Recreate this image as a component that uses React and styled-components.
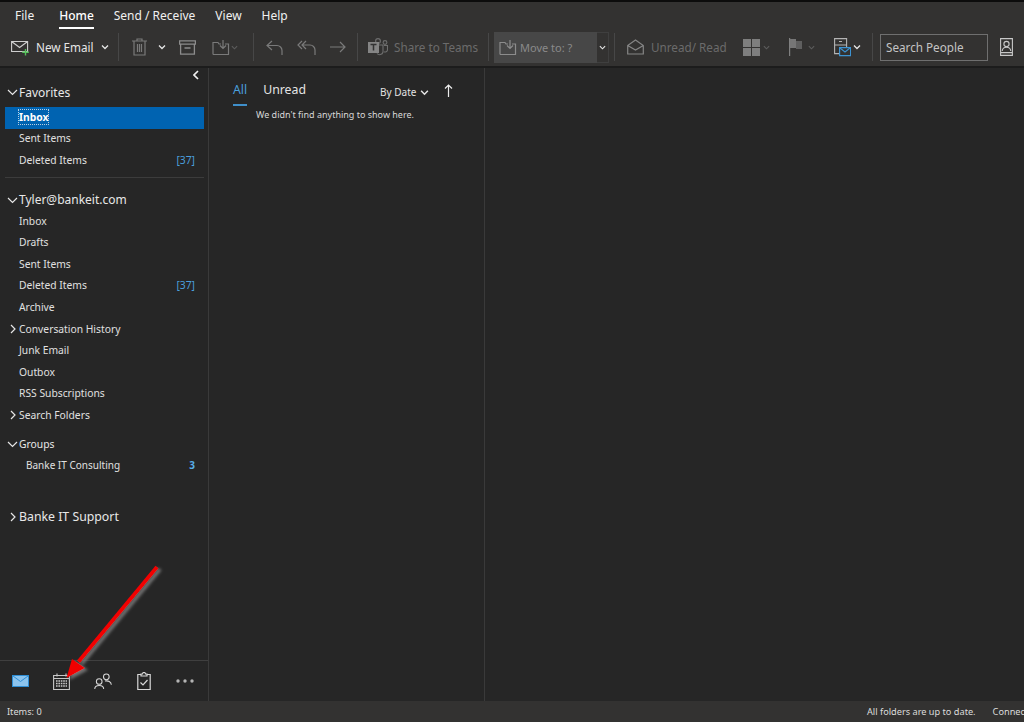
import React from 'react';
import styled, { createGlobalStyle } from 'styled-components';

const GlobalStyle = createGlobalStyle`
  html, body { margin: 0; padding: 0; background: #262626; }
  body { font-family: "Noto Sans", "Open Sans", "Liberation Sans", sans-serif; overflow: hidden; }
  * { box-sizing: border-box; }
`;

const Styled = {
  Page: styled.div`
    position: relative;
    display: flex;
    flex-flow: column;
    width: 1024px;
    height: 722px;
    background: #262626;
    color: #e6e6e6;
  `,
  Ribbon: styled.header`
    flex: none;
    height: 68px;
    border-top: 2px solid #0c0c0c;
    border-bottom: 2px solid #1c1c1c;
    background: #333231;
  `,
  Tabs: styled.nav`
    display: flex;
    height: 26px;
    padding: 2px 0 0 15px;
  `,
  Tab: styled.div`
    position: relative;
    margin-right: ${p => p.$gap}px;
    color: #f0f0f0;
    font-size: 12px;
    line-height: 23px;
    ${p => p.$active && `
      font-weight: 500;
      color: #fff;
      &::after {
        content: '';
        position: absolute;
        left: 0;
        right: 0;
        bottom: -1px;
        height: 2px;
        background: #fff;
      }
    `}
  `,
  Toolbar: styled.div`
    display: flex;
    align-items: center;
    height: 36px;
    padding: 2px 0 0 11px;
  `,
  Tool: styled.div`
    display: flex;
    flex: none;
    align-items: center;
    width: ${p => (p.$w ? `${p.$w}px` : 'auto')};
    color: ${p => (p.$dim ? '#6b6b6b' : '#e6e6e6')};
    font-size: 11.7px;
    white-space: nowrap;
    svg { flex: none; }
  `,
  ToolLabel: styled.span`
    display: flex;
    margin-left: ${p => p.$ml ?? 6}px;
  `,
  Sep: styled.div`
    flex: none;
    width: 1px;
    height: 28px;
    margin: 0 ${p => p.$r ?? 8}px 0 ${p => p.$l ?? 8}px;
    background: #474747;
  `,
  MoveTo: styled.div`
    display: flex;
    flex: none;
    align-items: center;
    width: 115px;
    height: 31px;
    background: #474747;
    color: #8a8a8a;
    font-size: 11px;
  `,
  MoveMain: styled.div`
    display: flex;
    flex: 1;
    align-items: center;
    padding-left: 5px;
    span { margin-left: 3px; }
  `,
  MoveDrop: styled.div`
    display: flex;
    align-items: center;
    justify-content: center;
    width: 12px;
    height: 31px;
    background: #333231;
    border: 1px solid #3f3f3f;
    border-left: 0;
  `,
  Search: styled.div`
    flex: none;
    width: 108px;
    height: 27px;
    margin-right: 12px;
    padding-left: 5px;
    border: 1px solid #6f6f6f;
    color: #c4c4c4;
    font-size: 11.7px;
    line-height: 25px;
  `,
  Body: styled.div`
    display: flex;
    flex: 1;
    min-height: 0;
  `,
  Sidebar: styled.aside`
    display: flex;
    flex: none;
    flex-flow: column;
    width: 209px;
    border-right: 1px solid #3a3a3a;
  `,
  Collapse: styled.div`
    display: flex;
    justify-content: flex-end;
    height: 15px;
    padding: 2px 9px 0 0;
  `,
  Folders: styled.div`
    flex: 1;
    padding: 0 4px 0 5px;
  `,
  Header: styled.div`
    display: flex;
    align-items: center;
    height: ${p => p.$h ?? 22}px;
    margin-top: ${p => p.$mt ?? 0}px;
    padding-bottom: ${p => p.$pb ?? 0}px;
    color: #e8e8e8;
    font-size: ${p => p.$size ?? 12}px;
    svg { flex: none; width: 14px; }
  `,
  Row: styled.div`
    display: flex;
    align-items: center;
    justify-content: space-between;
    height: 21.6px;
    padding: 0 9px 2px ${p => p.$indent ?? 14}px;
    color: #e0e0e0;
    font-size: ${p => p.$size ?? 10.3}px;
    white-space: nowrap;
    ${p => p.$selected && `
      background: #0063b1;
      color: #fff;
      font-weight: 700;
    `}
  `,
  ExpandRow: styled.div`
    display: flex;
    align-items: center;
    height: 21.6px;
    padding-bottom: 2px;
    color: #e0e0e0;
    font-size: 10.3px;
    svg { flex: none; width: 14px; }
  `,
  Focused: styled.span`
    outline: 1px dotted #b8cfe2;
  `,
  Count: styled.span`
    color: ${p => (p.$bold ? '#58aee8' : '#4a9fdc')};
    font-weight: ${p => (p.$bold ? 700 : 400)};
  `,
  Divider: styled.div`
    height: 1px;
    margin: 5px 0 11px;
    background: #3c3c3c;
  `,
  NavBar: styled.div`
    display: flex;
    flex: none;
    align-items: center;
    height: 41px;
    padding-left: 12px;
    border-top: 1px solid #3f3f3f;
  `,
  NavItem: styled.div`
    display: flex;
    flex: none;
    align-items: center;
    width: ${p => p.$w}px;
  `,
  List: styled.section`
    flex: none;
    width: 276px;
    border-right: 1px solid #3a3a3a;
  `,
  ListHead: styled.div`
    display: flex;
    align-items: flex-start;
    height: 40px;
    padding: 13px 0 0 24px;
  `,
  Filter: styled.div`
    position: relative;
    margin-right: ${p => p.$gap}px;
    height: 25px;
    color: ${p => (p.$active ? '#4a9fdc' : '#e4e4e4')};
    font-size: 12.3px;
    line-height: 18px;
    ${p => p.$active && `
      &::after {
        content: '';
        position: absolute;
        left: 0;
        right: 0;
        bottom: 0;
        height: 2px;
        background: #3f8fca;
      }
    `}
  `,
  Sort: styled.div`
    display: flex;
    align-items: center;
    gap: 4px;
    height: 22px;
    color: #e4e4e4;
    font-size: 10px;
    white-space: nowrap;
  `,
  SortArrow: styled.svg`
    margin: -3px 0 0 11px;
  `,
  Empty: styled.p`
    margin: 0;
    padding-left: 47px;
    color: #d8d8d8;
    font-size: 9px;
    line-height: 14px;
  `,
  Reading: styled.main`
    flex: 1;
  `,
  StatusBar: styled.footer`
    display: flex;
    flex: none;
    align-items: center;
    justify-content: space-between;
    height: 21px;
    padding-left: 7px;
    background: #333231;
    color: #dcdcdc;
    font-size: 9.2px;
    white-space: nowrap;
    overflow: hidden;
  `,
  StatusRight: styled.div`
    display: flex;
    flex: none;
    gap: 17px;
    width: 157px;
  `,
  Arrow: styled.svg`
    position: absolute;
    left: 50px;
    top: 560px;
    pointer-events: none;
  `,
};

const Chevron = ({ color = '#e6e6e6', size = 8 }) => (
  <svg width={size} height={size} viewBox="0 0 8 8" fill="none" stroke={color} strokeWidth="1.3">
    <path d="M1 2.5 4 5.5 7 2.5" />
  </svg>
);

const FolderDown = ({ color }) => (
  <svg width="18" height="17" viewBox="0 0 18 17" fill="none" stroke={color} strokeWidth="1.2">
    <path d="M1 15.5V3.5H6L7 5H9M13 5h3.5v10.5H1" />
    <path d="M11 1v8M8 6.5 11 9.5 14 6.5" />
  </svg>
);

const DIM = '#7a7a7a';

const Ribbon = () => (
  <Styled.Ribbon>
    <Styled.Tabs>
      <Styled.Tab $gap={25}>File</Styled.Tab>
      <Styled.Tab $gap={20} $active>Home</Styled.Tab>
      <Styled.Tab $gap={20}>Send / Receive</Styled.Tab>
      <Styled.Tab $gap={20}>View</Styled.Tab>
      <Styled.Tab $gap={0}>Help</Styled.Tab>
    </Styled.Tabs>
    <Styled.Toolbar>
      <Styled.Tool $w={107}>
        <svg width="19" height="17" viewBox="0 0 19 17" fill="none">
          <path d="M.6 2.5h16v10H.6z M.6 2.5 8.6 8.5 16.6 2.5" stroke="#cfcfcf" strokeWidth="1.1" />
          <path d="M14.5 10v6.5M11.2 13.3h6.6" stroke="#55c15b" strokeWidth="1.4" />
        </svg>
        <Styled.ToolLabel>New Email</Styled.ToolLabel>
        <Styled.ToolLabel $ml={8}><Chevron /></Styled.ToolLabel>
      </Styled.Tool>
      <Styled.Sep $l={0} $r={13} />
      <Styled.Tool $w={26}>
        <svg width="15" height="18" viewBox="0 0 15 18" fill="none" stroke={DIM} strokeWidth="1.2">
          <path d="M0 3h15M5 3V1h5v2M2 3v14h11V3M5.5 6v8M7.5 6v8M9.5 6v8" />
        </svg>
      </Styled.Tool>
      <Styled.Tool $w={21}><Chevron /></Styled.Tool>
      <Styled.Tool $w={33}>
        <svg width="17" height="15" viewBox="0 0 17 15" fill="none" stroke="#8c8c8c" strokeWidth="1.3">
          <path d="M.6.8h15.8v3.4H.6zM1.6 4.2v10h13.8v-10M5.5 8h6" />
        </svg>
      </Styled.Tool>
      <Styled.Tool $w={41}>
        <FolderDown color={DIM} />
        <Styled.ToolLabel $ml={1}><Chevron color="#5c5c5c" size={7} /></Styled.ToolLabel>
      </Styled.Tool>
      <Styled.Sep $l={0} $r={12} />
      <Styled.Tool $w={31}>
        <svg width="17" height="15" viewBox="0 0 17 15" fill="none" stroke={DIM} strokeWidth="1.2">
          <path d="M6 1 1 5.5 6 10M1 5.5h10a5 5 0 0 1 5 5V15" />
        </svg>
      </Styled.Tool>
      <Styled.Tool $w={33}>
        <svg width="19" height="15" viewBox="0 0 19 15" fill="none" stroke={DIM} strokeWidth="1.2">
          <path d="M5 1 1 5l4 4M9 1 5 5l4 4M5 5h8a5 5 0 0 1 5 5v5" />
        </svg>
      </Styled.Tool>
      <Styled.Tool $w={27}>
        <svg width="16" height="12" viewBox="0 0 16 12" fill="none" stroke={DIM} strokeWidth="1.2">
          <path d="M0 6h15M10 1l5 5-5 5" />
        </svg>
      </Styled.Tool>
      <Styled.Sep $l={0} $r={10} />
      <Styled.Tool $w={120} $dim>
        <svg width="20" height="18" viewBox="0 0 20 18" fill="none">
          <circle cx="10" cy="3" r="2.4" fill="none" stroke="#6e6e6e" strokeWidth="1.1" />
          <circle cx="17" cy="4.5" r="1.9" fill="none" stroke="#6e6e6e" strokeWidth="1.1" />
          <path d="M9 7h6v7a3.5 3.5 0 0 1-6 1.5M16 7.5h3.5V12a2.5 2.5 0 0 1-3.5 1.7" stroke="#6e6e6e" strokeWidth="1.1" />
          <rect x="0" y="4" width="11" height="11" fill="#858585" />
          <path d="M2.5 6.5h6M5.5 6.5v6" stroke="#333" strokeWidth="1.5" />
        </svg>
        <Styled.ToolLabel>Share to Teams</Styled.ToolLabel>
      </Styled.Tool>
      <Styled.Sep $l={0} $r={5} />
      <Styled.MoveTo>
        <Styled.MoveMain>
          <FolderDown color="#8c8c8c" />
          <span>Move to: ?</span>
        </Styled.MoveMain>
        <Styled.MoveDrop><Chevron size={7} /></Styled.MoveDrop>
      </Styled.MoveTo>
      <Styled.Sep $l={5} $r={12} />
      <Styled.Tool $w={116} $dim>
        <svg width="17" height="16" viewBox="0 0 17 16" fill="none" stroke="#858585" strokeWidth="1.2">
          <path d="M.7 6.5 8.5 1l7.8 5.5V15H.7zM.7 6.5l7.8 4.5 7.8-4.5" />
        </svg>
        <Styled.ToolLabel $ml={7}>Unread/ Read</Styled.ToolLabel>
      </Styled.Tool>
      <Styled.Tool $w={46}>
        <svg width="17" height="17" viewBox="0 0 17 17" fill="#7e7e7e">
          <path d="M0 0h8v8H0zM9 0h8v8H9zM0 9h8v8H0zM9 9h8v8H9z" />
        </svg>
        <Styled.ToolLabel $ml={3}><Chevron color="#5c5c5c" size={7} /></Styled.ToolLabel>
      </Styled.Tool>
      <Styled.Tool $w={45}>
        <svg width="14" height="18" viewBox="0 0 14 18" fill="none">
          <path d="M.6 0v18" stroke="#808080" strokeWidth="1.2" />
          <path d="M1 1h6v9H1z" fill="#767676" />
          <path d="M7 3h6v8H7z" fill="#5f5f5f" />
        </svg>
        <Styled.ToolLabel $ml={5}><Chevron color="#5c5c5c" size={7} /></Styled.ToolLabel>
      </Styled.Tool>
      <Styled.Tool $w={38}>
        <svg width="17" height="19" viewBox="0 0 17 19" fill="none">
          <path d="M.6.6h12v15H.6zM.6 7h12M5 3.5h3" stroke="#b4b4b4" strokeWidth="1.1" />
          <path d="M5.6 9.6h11v8h-11z" fill="#333231" stroke="#3c93d2" strokeWidth="1.2" />
          <path d="M6 10l5 4 5-4" stroke="#3c93d2" strokeWidth="1.1" />
        </svg>
        <Styled.ToolLabel $ml={2}><Chevron /></Styled.ToolLabel>
      </Styled.Tool>
      <Styled.Sep $l={0} $r={7} />
      <Styled.Search>Search People</Styled.Search>
      <Styled.Tool>
        <svg width="13" height="18" viewBox="0 0 13 18" fill="none" stroke="#c8c8c8" strokeWidth="1.1">
          <path d="M.6.6h11.8v16.8H.6zM.6 14.6h11.8" />
          <circle cx="6.5" cy="6" r="2.6" />
          <path d="M2.2 13c.3-2.6 2-3.8 4.3-3.8s4 1.2 4.3 3.8" />
        </svg>
      </Styled.Tool>
    </Styled.Toolbar>
  </Styled.Ribbon>
);

const Down = () => (
  <svg width="14" height="12" viewBox="0 0 14 12" fill="none" stroke="#e6e6e6" strokeWidth="1.2">
    <path d="M3 4 7.5 8.5 12 4" />
  </svg>
);

const Right = () => (
  <svg width="14" height="12" viewBox="0 0 14 12" fill="none" stroke="#e6e6e6" strokeWidth="1.2">
    <path d="M6 2 10 6 6 10" />
  </svg>
);

const Sidebar = () => (
  <Styled.Sidebar>
    <Styled.Collapse>
      <svg width="6" height="10" viewBox="0 0 6 10" fill="none" stroke="#f0f0f0" strokeWidth="1.7">
        <path d="M5 1 1 5 5 9" />
      </svg>
    </Styled.Collapse>
    <Styled.Folders>
      <Styled.Header $h={24} $pb={6}><Down />Favorites</Styled.Header>
      <Styled.Row $selected><Styled.Focused>Inbox</Styled.Focused></Styled.Row>
      <Styled.Row>Sent Items</Styled.Row>
      <Styled.Row>Deleted Items<Styled.Count>[37]</Styled.Count></Styled.Row>
      <Styled.Divider />
      <Styled.Header><Down />Tyler@bankeit.com</Styled.Header>
      <Styled.Row>Inbox</Styled.Row>
      <Styled.Row>Drafts</Styled.Row>
      <Styled.Row>Sent Items</Styled.Row>
      <Styled.Row>Deleted Items<Styled.Count>[37]</Styled.Count></Styled.Row>
      <Styled.Row>Archive</Styled.Row>
      <Styled.ExpandRow><Right />Conversation History</Styled.ExpandRow>
      <Styled.Row>Junk Email</Styled.Row>
      <Styled.Row>Outbox</Styled.Row>
      <Styled.Row>RSS Subscriptions</Styled.Row>
      <Styled.ExpandRow><Right />Search Folders</Styled.ExpandRow>
      <Styled.Header $mt={6} $size={10.3}><Down />Groups</Styled.Header>
      <Styled.Row $indent={21} $size={10}>Banke IT Consulting<Styled.Count $bold>3</Styled.Count></Styled.Row>
      <Styled.Header $mt={29} $h={23} $size={12.3}><Right />Banke IT Support</Styled.Header>
    </Styled.Folders>
    <Styled.NavBar>
      <Styled.NavItem $w={41}>
        <svg width="17" height="12" viewBox="0 0 17 12">
          <rect x=".5" y=".5" width="16" height="11" fill="#8cc4ee" stroke="#2f8ed4" />
          <path d="M1 1l7.5 5.5L16 1" fill="none" stroke="#2f8ed4" />
        </svg>
      </Styled.NavItem>
      <Styled.NavItem $w={41}>
        <svg width="17" height="17" viewBox="0 0 17 17" fill="none">
          <path d="M.6 2.5h15.8v14H.6zM.6 5.5h15.8M4 .5v3M13 .5v3" stroke="#c8c8c8" strokeWidth="1.1" />
          <path d="M3 8h11M3 10.5h11M3 13h11" stroke="#c8c8c8" strokeWidth="1.6" strokeDasharray="1.6 .8" />
        </svg>
      </Styled.NavItem>
      <Styled.NavItem $w={43}>
        <svg width="18" height="17" viewBox="0 0 19 17" fill="none" stroke="#d8d8d8" strokeWidth="1.1">
          <circle cx="5.5" cy="8.5" r="3" />
          <path d="M.8 16.5c0-2.8 2-3.8 4.7-3.8s4.7 1 4.7 3.8" />
          <circle cx="13" cy="3.6" r="3" />
          <path d="M11.5 8c3.5-.6 6.6.6 6.8 4" />
        </svg>
      </Styled.NavItem>
      <Styled.NavItem $w={39}>
        <svg width="14" height="18" viewBox="0 0 14 18" fill="none" stroke="#d8d8d8" strokeWidth="1.2">
          <path d="M4 2.5H.8v15h12.4v-15H10M4 4V2h1.5a1.5 1.5 0 0 1 3 0H10v2z" />
          <path d="M3.5 10.5 6 13l4.5-5" />
        </svg>
      </Styled.NavItem>
      <Styled.NavItem $w={18}>
        <svg width="18" height="4" viewBox="0 0 18 4" fill="#b4b4b4">
          <circle cx="2" cy="2" r="1.7" /><circle cx="9" cy="2" r="1.7" /><circle cx="16" cy="2" r="1.7" />
        </svg>
      </Styled.NavItem>
    </Styled.NavBar>
  </Styled.Sidebar>
);

const MessageList = () => (
  <Styled.List>
    <Styled.ListHead>
      <Styled.Filter $active $gap={16}>All</Styled.Filter>
      <Styled.Filter $gap={74}>Unread</Styled.Filter>
      <Styled.Sort>
        By Date
        <Chevron size={9} />
        <Styled.SortArrow width="9" height="13" viewBox="0 0 9 13" fill="none" stroke="#ececec" strokeWidth="1.2">
          <path d="M4.5 13V1M1 4.5 4.5 1 8 4.5" />
        </Styled.SortArrow>
      </Styled.Sort>
    </Styled.ListHead>
    <Styled.Empty>We didn't find anything to show here.</Styled.Empty>
  </Styled.List>
);

export default function App() {
  return (
    <Styled.Page>
      <GlobalStyle />
      <Ribbon />
      <Styled.Body>
        <Sidebar />
        <MessageList />
        <Styled.Reading />
      </Styled.Body>
      <Styled.StatusBar>
        <span>Items: 0</span>
        <Styled.StatusRight>
          <span>All folders are up to date.</span>
          <span>Connected</span>
        </Styled.StatusRight>
      </Styled.StatusBar>
      <Styled.Arrow width="120" height="135" viewBox="0 0 120 135">
        <defs>
          <filter id="arrowShadow" x="-30%" y="-30%" width="160%" height="160%">
            <feDropShadow dx="3" dy="2" stdDeviation="1.5" floodColor="#8a8a8a" floodOpacity="0.75" />
          </filter>
        </defs>
        <g filter="url(#arrowShadow)" fill="#f20000">
          <path d="M105.5 5.7 108.5 8.3 30 103 27 100.500z" />
          <path d="M16.500 118 22 99 35 108z" />
        </g>
      </Styled.Arrow>
    </Styled.Page>
  );
}
